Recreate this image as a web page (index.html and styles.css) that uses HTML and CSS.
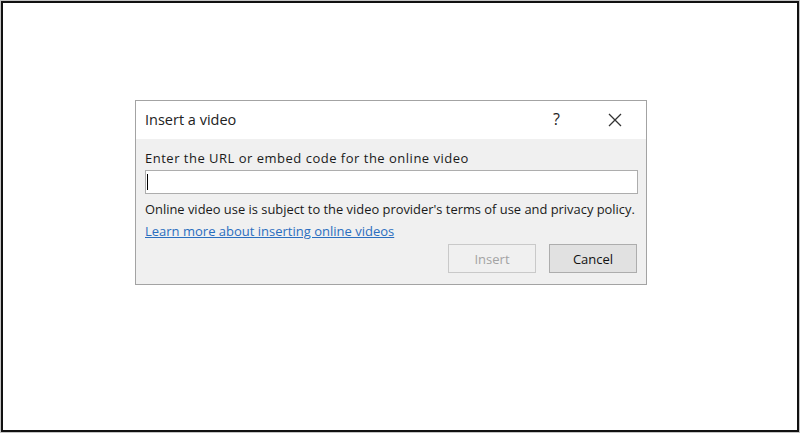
FILE: index.html
```html
<!DOCTYPE html>
<html lang="en">
<head>
<meta charset="UTF-8" />
<title>Insert a video</title>
<link rel="stylesheet" href="styles.css">
</head>
<body>

<div class="screen">
  <!-- Insert video dialog -->
  <div class="dialog">
    <div class="title-bar">
      <span class="title">Insert a video</span>
      <span class="help">?</span>
      <span class="close">
        <svg width="14" height="14" viewBox="0 0 14 14"><path d="M1 1 L13 13 M13 1 L1 13" stroke="#333" stroke-width="1.3" fill="none"/></svg>
      </span>
    </div>
    <div class="dialog-body">
      <label class="field-label">Enter the URL or embed code for the online video</label>
      <div class="url-box"><span class="caret"></span></div>
      <p class="notice">Online video use is subject to the video provider's terms of use and privacy policy.</p>
      <a class="learn-link" href="#">Learn more about inserting online videos</a>
      <div class="buttons">
        <button class="button" disabled>Insert</button>
        <button class="button">Cancel</button>
      </div>
    </div>
  </div>
</div>

</body>
</html>
```

FILE: styles.css
```css
body {
  margin: 0;
  background: #c4c4c4;
  font-family: "Open Sans", "Noto Sans", sans-serif;
}
.screen {
  box-sizing: border-box;
  width: 798px;
  height: 431px;
  margin: 1px 0 0 1px;
  border: 2px solid #111;
  background: #fff;
  padding: 97px 0 0 132px;
}
.dialog {
  box-sizing: border-box;
  width: 512px;
  height: 185px;
  border: 1px solid #a3a3a3;
  background: #f0f0f0;
  display: flex;
  flex-direction: column;
}
.title-bar {
  flex-shrink: 0;
  height: 38px;
  background: #fff;
  display: flex;
  align-items: center;
  padding-left: 9px;
}
.title {
  flex-grow: 1;
  font-size: 14.5px;
  color: #222;
  margin-top: -1px;
}
.help {
  font-size: 16px;
  color: #222;
  margin-right: 48px;
  margin-top: -2px;
}
.close {
  display: flex;
  margin-right: 24px;
}
.dialog-body {
  padding: 11px 9px 0 9px;
}
.field-label {
  display: block;
  font-size: 13px;
  line-height: 16px;
  letter-spacing: 0.5px;
  color: #1a1a1a;
}
.url-box {
  box-sizing: border-box;
  width: 493px;
  height: 24px;
  margin-top: 4px;
  border: 1px solid #adadad;
  background: #fff;
  padding: 3px 0 0 1px;
}
.caret {
  display: block;
  width: 1px;
  height: 16px;
  background: #000;
}
.notice {
  margin: 6px 0 0 0;
  font-size: 12.9px;
  line-height: 18px;
  white-space: nowrap;
  color: #1a1a1a;
}
.learn-link {
  display: block;
  width: max-content;
  margin-top: 4px;
  font-size: 13px;
  line-height: 18px;
  color: #2a6ebf;
}
.buttons {
  display: flex;
  justify-content: flex-end;
  gap: 13px;
  margin-top: 4px;
  width: 492px;
}
.button {
  box-sizing: border-box;
  width: 88px;
  height: 29px;
  font-family: "Open Sans", "Noto Sans", sans-serif;
  font-size: 13px;
  color: #111;
  background: #e1e1e1;
  border: 1px solid #adadad;
}
.button:disabled {
  color: #a3a3a3;
  background: #f0f0f0;
  border-color: #c9c9c9;
}
```
